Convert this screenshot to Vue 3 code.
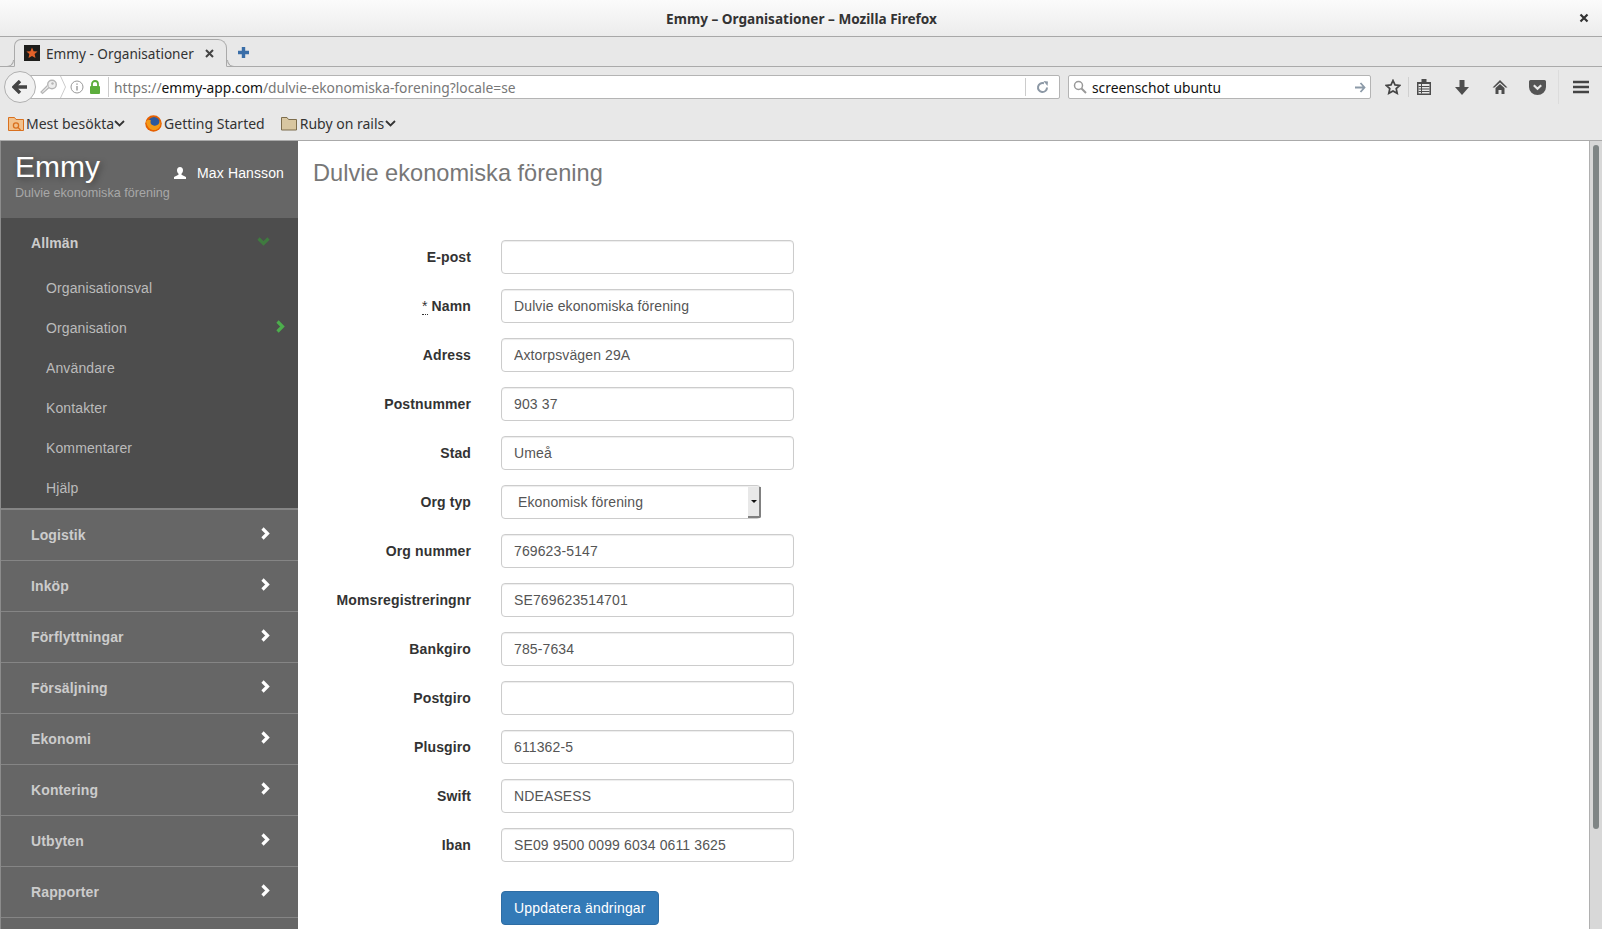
<script setup>
const fields = [
  { label: 'E-post', value: '' },
  { label: 'Namn', value: 'Dulvie ekonomiska förening', required: true },
  { label: 'Adress', value: 'Axtorpsvägen 29A' },
  { label: 'Postnummer', value: '903 37' },
  { label: 'Stad', value: 'Umeå' },
  { label: 'Org typ', value: 'Ekonomisk förening', select: true },
  { label: 'Org nummer', value: '769623-5147' },
  { label: 'Momsregistreringnr', value: 'SE769623514701' },
  { label: 'Bankgiro', value: '785-7634' },
  { label: 'Postgiro', value: '' },
  { label: 'Plusgiro', value: '611362-5' },
  { label: 'Swift', value: 'NDEASESS' },
  { label: 'Iban', value: 'SE09 9500 0099 6034 0611 3625' }
]

const subItems = ['Organisationsval', 'Organisation', 'Användare', 'Kontakter', 'Kommentarer', 'Hjälp']
const sections = ['Logistik', 'Inköp', 'Förflyttningar', 'Försäljning', 'Ekonomi', 'Kontering', 'Utbyten', 'Rapporter']
</script>

<template>
  <div class="window">
    <div class="titlebar">
      <span class="title">Emmy – Organisationer – Mozilla Firefox</span>
      <svg class="win-close" width="10" height="10" viewBox="0 0 10 10"><path d="M1.5 1.5l7 7M8.5 1.5l-7 7" stroke="#333" stroke-width="2.2"/></svg>
    </div>

    <div class="tabrow">
      <div class="tab">
        <svg class="favicon" width="16" height="16" viewBox="0 0 16 16">
          <rect width="16" height="16" fill="#1d1d1b"/>
          <path d="M8 2.500l1.600 3.700 4 .3-3 2.600.9 3.900L8 10.900 4.500 13l.9-3.900-3-2.600 4-.3z" fill="#e2622a"/>
        </svg>
        <span class="tab-text">Emmy - Organisationer</span>
        <svg class="tab-close" width="9" height="9" viewBox="0 0 9 9"><path d="M1 1l7 7M8 1L1 8" stroke="#444" stroke-width="2"/></svg>
      </div>
      <svg class="tab-plus" width="13" height="13" viewBox="0 0 13 13"><path d="M6.500 1v11M1 6.500h11" stroke="#3a6ea8" stroke-width="3.400"/></svg>
    </div>

    <div class="navbar">
      <div class="back">
        <svg width="16" height="14" viewBox="0 0 16 14"><path d="M8 1L2 7l6 6M3 7H15" fill="none" stroke="#444" stroke-width="3.400"/></svg>
      </div>
      <div class="urlbox">
        <svg class="key" width="18" height="16" viewBox="0 0 18 16">
          <circle cx="12" cy="5.500" r="4.300" fill="#eee" stroke="#b5b5b5" stroke-width="1.400"/>
          <circle cx="12.500" cy="4.500" r="1.200" fill="#b5b5b5"/>
          <path d="M9 8.500L2.500 14.500 1 13l6.500-6.500" fill="#eee" stroke="#b5b5b5" stroke-width="1.200"/>
        </svg>
        <svg class="crumb" width="6" height="24" viewBox="0 0 6 24"><path d="M0.500 1l5 11-5 11" fill="none" stroke="#ccc"/></svg>
        <svg class="info" width="14" height="14" viewBox="0 0 14 14">
          <circle cx="7" cy="7" r="6" fill="none" stroke="#999"/>
          <path d="M7 6v4.500M7 3.500v1.300" stroke="#999" stroke-width="1.400"/>
        </svg>
        <svg class="lock" width="12" height="14" viewBox="0 0 12 14">
          <rect x="1" y="6" width="10" height="8" rx="1" fill="#5cad3c"/>
          <path d="M3 6.500V4a3 3 0 0 1 6 0v2.500" fill="none" stroke="#5cad3c" stroke-width="1.800"/>
        </svg>
        <span class="url-sep"></span>
        <span class="url"><span class="dim">https://</span>emmy-app.com<span class="dim">/dulvie-ekonomiska-forening?locale=se</span></span>
        <span class="reload-sep"></span>
        <svg class="reload" width="13" height="13" viewBox="0 0 13 13">
          <path d="M11 6.500A4.500 4.500 0 1 1 8 2.300" fill="none" stroke="#8c98a5" stroke-width="2"/>
          <path d="M7.500 0l4.500 .5-.5 4.500z" fill="#8c98a5"/>
        </svg>
      </div>
      <div class="searchbox">
        <svg class="mag" width="14" height="14" viewBox="0 0 14 14">
          <circle cx="5.500" cy="5.500" r="4" fill="none" stroke="#999" stroke-width="1.500"/>
          <path d="M8.500 8.500l4.500 4.500" stroke="#999" stroke-width="2"/>
        </svg>
        <span class="search-text">screenschot ubuntu</span>
        <svg class="go" width="11" height="11" viewBox="0 0 11 11"><path d="M5.500 1l4 4.500-4 4.500M9 5.500H0" fill="none" stroke="#8c9aa8" stroke-width="1.800"/></svg>
      </div>
      <div class="tools">
        <svg class="t-star" width="16" height="16" viewBox="0 0 16 16"><path d="M8 1.500l2 4.400 4.800 .5-3.600 3.200 1 4.700L8 11.900l-4.200 2.400 1-4.700L1.200 6.400 6 5.900z" fill="none" stroke="#444" stroke-width="1.700"/></svg>
        <span class="t-sep"></span>
        <svg class="t-clip" width="14" height="16" viewBox="0 0 14 16">
          <path d="M0 3h4.500V0h5v3H14v13H0z" fill="#4d4d4d"/>
          <path d="M1.500 5h11v9.500h-11z" fill="#e8e8e8"/>
          <path d="M1.500 7.500h11M1.500 10h11M1.500 12.500h11M4.500 5v9.500" stroke="#4d4d4d"/>
        </svg>
        <svg class="t-down" width="14" height="16" viewBox="0 0 14 16"><path d="M4.500 1h5v7H14l-7 8-7-8h4.500z" fill="#4d4d4d"/></svg>
        <svg class="t-home" width="16" height="16" viewBox="0 0 16 16">
          <path d="M8 1L0.500 8.500h2L8 3.500l5.500 5h2z" fill="#4d4d4d"/>
          <path d="M3.500 9L8 5l4.500 4v6H9.500v-4h-3v4h-3z" fill="#4d4d4d"/>
        </svg>
        <svg class="t-pocket" width="17" height="15" viewBox="0 0 17 15">
          <path d="M1.500 0h14A1.500 1.500 0 0 1 17 1.500V7a8.500 8 0 0 1-17 0V1.500A1.500 1.500 0 0 1 1.500 0z" fill="#555"/>
          <path d="M4.800 5.300l3.700 3.500 3.700-3.500" fill="none" stroke="#e8e8e8" stroke-width="2.200"/>
        </svg>
        <span class="t-sep2"></span>
        <svg class="t-menu" width="16" height="14" viewBox="0 0 16 14"><path d="M0 2h16M0 7h16M0 12h16" stroke="#444" stroke-width="2.600"/></svg>
      </div>
    </div>

    <div class="bookmarks">
      <div class="bm bm-first">
        <svg width="16" height="16" viewBox="0 0 16 16">
          <path d="M0.500 1.500h6l1.500 2h7.500v11H0.500z" fill="#f2c28e" stroke="#d9701e"/>
          <circle cx="8" cy="9.500" r="2.600" fill="none" stroke="#d9701e" stroke-width="1.300"/>
          <path d="M10 11.500l2.500 2.500" stroke="#d9701e" stroke-width="1.300"/>
        </svg>
        <span>Mest besökta</span>
        <svg class="bm-chev" width="11" height="7" viewBox="0 0 11 7"><path d="M1 1l4.500 4.500L10 1" fill="none" stroke="#333" stroke-width="1.800"/></svg>
      </div>
      <div class="bm bm-ff">
        <svg width="17" height="17" viewBox="0 0 16 16">
          <circle cx="8" cy="8" r="7.800" fill="#e66000"/>
          <circle cx="8.500" cy="7" r="5.200" fill="#2c5a9e"/>
          <path d="M1 6c1 6 5 9 9 8s5.500-5 4-8.500c-.5 3.500-3 5-5.500 4.500S4.500 8 5.500 5C3.500 4.500 2 5 1 6z" fill="#f49a16"/>
        </svg>
        <span>Getting Started</span>
      </div>
      <div class="bm bm-folder">
        <svg width="16" height="15" viewBox="0 0 16 15">
          <path d="M0.500 1.500h5.500l1.500 2h8v10.500H0.500z" fill="#d8c6a0" stroke="#7d6d4c"/>
        </svg>
        <span>Ruby on rails</span>
        <svg class="bm-chev" width="11" height="7" viewBox="0 0 11 7"><path d="M1 1l4.500 4.500L10 1" fill="none" stroke="#333" stroke-width="1.800"/></svg>
      </div>
    </div>

    <div class="page">
      <aside class="sidebar">
        <header class="brand">
          <div>
            <div class="logo">Emmy</div>
            <div class="org">Dulvie ekonomiska förening</div>
          </div>
          <div class="user">
            <svg width="12" height="12" viewBox="0 0 12 12">
              <path d="M6 0c2 0 3 1.500 3 3.300 0 1.400-.6 2.700-1.500 3.400v1L12 10v2H0v-2l4.500-2.300v-1C3.600 6 3 4.700 3 3.300 3 1.500 4 0 6 0z" fill="#fff"/>
            </svg>
            <span>Max Hansson</span>
          </div>
        </header>

        <div class="open-section">
          <div class="open-head">
            <span>Allmän</span>
            <svg width="13" height="9" viewBox="0 0 13 9"><path d="M1.500 1.500l5 5 5-5" fill="none" stroke="#3f7a3f" stroke-width="3.200"/></svg>
          </div>
          <div v-for="item in subItems" :key="item" class="sub-item">
            <span>{{ item }}</span>
            <svg v-if="item === 'Organisation'" width="9" height="13" viewBox="0 0 9 13"><path d="M1.500 1.500l5 5-5 5" fill="none" stroke="#4cae4c" stroke-width="3.200"/></svg>
          </div>
        </div>

        <div v-for="s in sections" :key="s" class="section">
          <span>{{ s }}</span>
          <svg width="9" height="13" viewBox="0 0 9 13"><path d="M1.500 1.500l5 5-5 5" fill="none" stroke="#fff" stroke-width="3.200"/></svg>
        </div>
      </aside>

      <main class="content">
        <h1>Dulvie ekonomiska förening</h1>
        <form class="form" @submit.prevent>
          <div v-for="f in fields" :key="f.label" class="row">
            <label>
              <abbr v-if="f.required">*</abbr>
              {{ f.label }}
            </label>
            <div v-if="f.select" class="select-wrap">
              <select class="control select">
                <option>{{ f.value }}</option>
              </select>
              <span class="select-btn"><i></i></span>
            </div>
            <input v-else class="control" type="text" :value="f.value" />
          </div>
          <button class="btn" type="submit">Uppdatera ändringar</button>
        </form>
      </main>

      <div class="scrollbar"><div class="thumb"></div></div>
    </div>
  </div>
</template>

<style>
html, body {
  margin: 0;
  overflow: hidden;
}
</style>

<style scoped>
.window {
  width: 1602px;
  height: 929px;
  display: flex;
  flex-direction: column;
  overflow: hidden;
  background: #e8e8e8;
  font-family: "Noto Sans", sans-serif;
}

.titlebar {
  height: 36px;
  flex: none;
  display: flex;
  align-items: center;
  justify-content: center;
  position: relative;
  background: linear-gradient(#fbfbfb, #ececec);
  border-bottom: 1px solid #a8a8a8;
}
.title {
  font-size: 13.6px;
  font-weight: 700;
  color: #333;
  margin: 0 0 0 1px;
}
.win-close {
  position: absolute;
  right: 13px;
  top: 13px;
}

.tabrow {
  height: 29px;
  flex: none;
  display: flex;
  align-items: flex-end;
  padding-left: 14px;
  border-bottom: 1px solid #aaa;
}
.tab {
  position: relative;
  width: 213px;
  height: 28px;
  margin-bottom: -1px;
  box-sizing: border-box;
  display: flex;
  align-items: center;
  padding-left: 9px;
  background: #e8e8e8;
  border: 1px solid #aaa;
  border-bottom-color: #e8e8e8;
  border-radius: 7px 9px 0 0;
}
.tab::before,
.tab::after {
  content: "";
  position: absolute;
  bottom: -1px;
  width: 7px;
  height: 7px;
  box-sizing: border-box;
  border-bottom: 1px solid #aaa;
}
.tab::before {
  left: -8px;
  border-right: 1px solid #aaa;
  border-bottom-right-radius: 7px;
}
.tab::after {
  right: -8px;
  border-left: 1px solid #aaa;
  border-bottom-left-radius: 7px;
}
.favicon {
  flex: none;
}
.tab-text {
  margin-left: 6px;
  font-size: 13.6px;
  color: #333;
  white-space: nowrap;
}
.tab-close {
  margin-left: 11px;
}
.tab-plus {
  align-self: center;
  margin: 1px 0 0 10px;
}

.navbar {
  height: 38px;
  flex: none;
  box-sizing: border-box;
  display: flex;
  align-items: center;
  padding: 2px 0 0 4px;
}
.back {
  width: 30px;
  height: 30px;
  border-radius: 50%;
  background: #f1f1f1;
  border: 1px solid #b0b0b0;
  display: flex;
  align-items: center;
  justify-content: center;
  position: relative;
  z-index: 1;
  flex: none;
}
.urlbox {
  width: 1036px;
  height: 24px;
  margin-left: -12px;
  box-sizing: border-box;
  display: flex;
  align-items: center;
  background: #fff;
  border: 1px solid #b4b4b4;
  border-radius: 0 2px 2px 0;
}
.key {
  margin-left: 15px;
}
.crumb {
  margin-left: 2px;
}
.info {
  margin-left: 4px;
}
.lock {
  margin-left: 5px;
}
.url-sep {
  width: 1px;
  height: 20px;
  background: #ccc;
  margin-left: 7px;
}
.url {
  margin-left: 5px;
  font-size: 13.8px;
  color: #111;
  white-space: nowrap;
  flex: 1;
}
.dim {
  color: #777;
}
.reload-sep {
  width: 1px;
  height: 18px;
  background: #ccc;
}
.reload {
  margin: 0 10px;
}
.searchbox {
  width: 303px;
  height: 24px;
  margin-left: 8px;
  box-sizing: border-box;
  display: flex;
  align-items: center;
  padding: 0 4px;
  background: #fff;
  border: 1px solid #b4b4b4;
  border-radius: 2px;
  flex: none;
}
.search-text {
  margin-left: 5px;
  font-size: 13.8px;
  color: #111;
  flex: 1;
}
.tools {
  display: flex;
  align-items: center;
  flex: none;
  margin-left: 14px;
}
.t-sep {
  width: 1px;
  height: 20px;
  background: #d0d0d0;
  margin: 0 8px 0 7px;
}
.t-down {
  margin-left: 24px;
}
.t-home {
  margin-left: 23px;
}
.t-pocket {
  margin-left: 21px;
}
.t-sep2 {
  width: 1px;
  height: 34px;
  background: #dcdcdc;
  margin-left: 12px;
}
.t-menu {
  margin-left: 14px;
}

.bookmarks {
  height: 36px;
  flex: none;
  box-sizing: border-box;
  display: flex;
  align-items: center;
  padding: 2px 0 0 8px;
  border-bottom: 1px solid #aaa;
  font-size: 14px;
  color: #333;
}
.bm {
  display: flex;
  align-items: center;
  gap: 3px;
  white-space: nowrap;
}
.bm-first {
  gap: 2px;
}
.bm-ff {
  margin-left: 20px;
  gap: 2px;
}
.bm-folder {
  margin-left: 16px;
}
.bm-chev {
  margin-left: -2px;
}

.page {
  flex: 1;
  min-height: 0;
  display: flex;
  background: #fff;
  font-family: "Liberation Sans", Arial, sans-serif;
  font-size: 14px;
  letter-spacing: .12px;
}

.sidebar {
  width: 298px;
  flex: none;
  box-sizing: border-box;
  border-left: 1px solid #8c8c8c;
  background: #666;
  overflow: hidden;
}
.brand {
  height: 77px;
  box-sizing: border-box;
  display: flex;
  justify-content: space-between;
  padding: 8px 14px 0 14px;
}
.logo {
  font-size: 30px;
  line-height: 36px;
  letter-spacing: 0;
  color: #fff;
  text-shadow: 2px 2px 6px rgba(0, 0, 0, .4);
}
.org {
  margin-top: 1px;
  font-size: 12.6px;
  line-height: 15px;
  letter-spacing: 0;
  color: #a8a8a8;
}
.user {
  display: flex;
  align-items: center;
  gap: 11px;
  height: 20px;
  margin-top: 14px;
  color: #fff;
}
.open-section {
  background: #4d4d4d;
  border-bottom: 2px solid #858585;
}
.open-head {
  height: 50px;
  display: flex;
  justify-content: space-between;
  align-items: center;
  padding: 0 28px 0 30px;
  font-weight: 700;
  color: #ccc;
}
.open-head svg {
  margin-top: -3px;
}
.sub-item {
  height: 40px;
  display: flex;
  justify-content: space-between;
  align-items: center;
  padding: 0 13px 0 45px;
  color: #bbb;
}
.sub-item svg {
  margin-top: -3px;
}
.section {
  height: 50px;
  display: flex;
  justify-content: space-between;
  align-items: center;
  padding: 0 28px 0 30px;
  border-bottom: 1px solid #858585;
  font-weight: 700;
  color: #ccc;
}
.section svg {
  margin-top: -3px;
}

.content {
  flex: 1;
  min-width: 0;
  padding: 0 16px 0 15px;
  color: #333;
}
h1 {
  margin: 18px 0 0;
  font-size: 23.6px;
  font-weight: 400;
  line-height: 28px;
  letter-spacing: 0;
  color: #777;
}
.form {
  margin-top: 53px;
}
.row {
  display: flex;
  align-items: center;
  height: 34px;
  margin-bottom: 15px;
}
label {
  width: 158px;
  margin-right: 30px;
  text-align: right;
  font-weight: 700;
  flex: none;
}
abbr {
  font-weight: 400;
  border-bottom: 1px dotted #333;
}
.control {
  width: 293px;
  height: 34px;
  box-sizing: border-box;
  padding: 6px 12px;
  background: #fff;
  border: 1px solid #ccc;
  border-radius: 4px;
  box-shadow: inset 0 1px 1px rgba(0, 0, 0, .075);
  font-family: inherit;
  font-size: 14px;
  letter-spacing: inherit;
  color: #555;
  outline: none;
}
.select-wrap {
  position: relative;
  width: 260px;
  height: 34px;
}
.select {
  width: 100%;
  appearance: none;
  padding-left: 16px;
}
.select-btn {
  position: absolute;
  right: 0;
  top: 2px;
  width: 13px;
  height: 31px;
  background: #e8e8e8;
  border-right: 2px solid #808080;
  border-bottom: 2px solid #808080;
  border-radius: 0 0 2px 0;
  box-sizing: border-box;
  display: flex;
  align-items: center;
  justify-content: center;
}
.select-btn i {
  width: 0;
  height: 0;
  border-left: 3px solid transparent;
  border-right: 3px solid transparent;
  border-top: 3px solid #111;
}
.btn {
  display: block;
  margin: 29px 0 0 188px;
  height: 34px;
  padding: 6px 12px;
  background: #337ab7;
  border: 1px solid #2e6da4;
  border-radius: 4px;
  font-family: inherit;
  font-size: 14px;
  letter-spacing: .17px;
  color: #fff;
}

.scrollbar {
  width: 13px;
  flex: none;
  box-sizing: border-box;
  background: #d8d8d8;
  border-left: 1px solid #b0b0b0;
  padding: 4px 3px 0;
}
.thumb {
  width: 6px;
  height: 684px;
  border-radius: 3px;
  background: #7f8585;
}
</style>
